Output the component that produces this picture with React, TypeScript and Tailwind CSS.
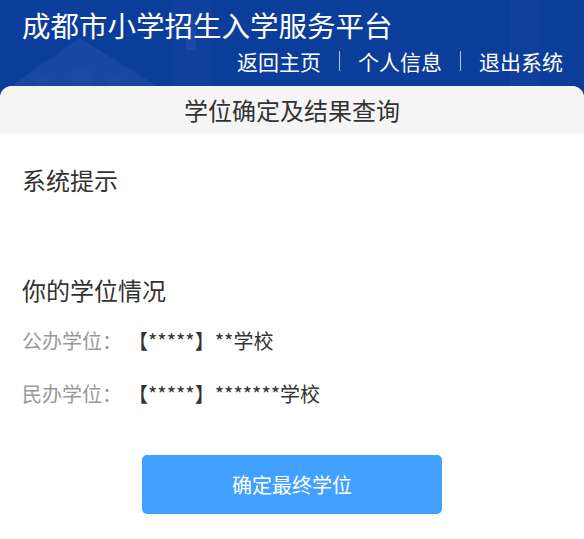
import React from "react";

const font = '"Noto Sans CJK SC", "Liberation Sans", sans-serif';

export default function App() {
  return (
    <div className="w-[584px] h-[539px] bg-white overflow-hidden" style={{ fontFamily: font }}>
      <div className="relative h-[100px] bg-[#0b3d9b] overflow-hidden">
        <svg className="absolute inset-0" width="584" height="100" viewBox="0 0 584 100">
          <polygon points="-10,100 80,38 180,100" fill="#2a58a8" opacity="0.4" />
          <rect x="36" y="74" width="14" height="26" rx="7" fill="#1b4aa0" opacity="0.7" />
          <rect x="70" y="66" width="22" height="34" rx="11" fill="#1b4aa0" opacity="0.7" />
          <rect x="108" y="74" width="14" height="26" rx="7" fill="#1b4aa0" opacity="0.7" />
          <rect x="172" y="0" width="40" height="100" fill="#1a4aa4" opacity="0.3" />
          <rect x="186" y="20" width="10" height="30" fill="#2e5cb0" opacity="0.35" />
          <rect x="510" y="0" width="30" height="100" fill="#1a4aa4" opacity="0.25" />
        </svg>
        <div className="relative pl-[22px] pt-[9px] text-white text-[28.5px] leading-[32px]">
          成都市小学招生入学服务平台
        </div>
        <div className="relative flex justify-end items-center pr-[21px] mt-[6px] text-white text-[21px] leading-[28px]">
          <span>返回主页</span>
          <span className="mx-[18px] w-px h-[20px] bg-white/70" />
          <span>个人信息</span>
          <span className="mx-[18px] w-px h-[20px] bg-white/70" />
          <span>退出系统</span>
        </div>
      </div>
      <div className="relative -mt-[14px] rounded-t-[12px] bg-white overflow-hidden">
        <div className="h-[48px] bg-[#f5f5f5] flex items-center justify-center text-[24px] text-[#333]">
          学位确定及结果查询
        </div>
        <div className="px-[22px]">
          <div className="mt-[30px] text-[24px] leading-[32px] text-[#333]">系统提示</div>
          <div className="mt-[78px] text-[24px] leading-[32px] text-[#333]">你的学位情况</div>
          <div className="mt-[21px] flex text-[20px] leading-[28px]">
            <span className="text-[#999] w-[106px]">公办学位：</span>
            <span className="text-[#333]">【*****】**学校</span>
          </div>
          <div className="mt-[25px] flex text-[20px] leading-[28px]">
            <span className="text-[#999] w-[106px]">民办学位：</span>
            <span className="text-[#333]">【*****】*******学校</span>
          </div>
          <div className="mt-[47px] flex justify-center">
            <button className="w-[300px] h-[59px] rounded-[5px] bg-[#42a0ff] text-white text-[20px]">
              确定最终学位
            </button>
          </div>
        </div>
      </div>
    </div>
  );
}
